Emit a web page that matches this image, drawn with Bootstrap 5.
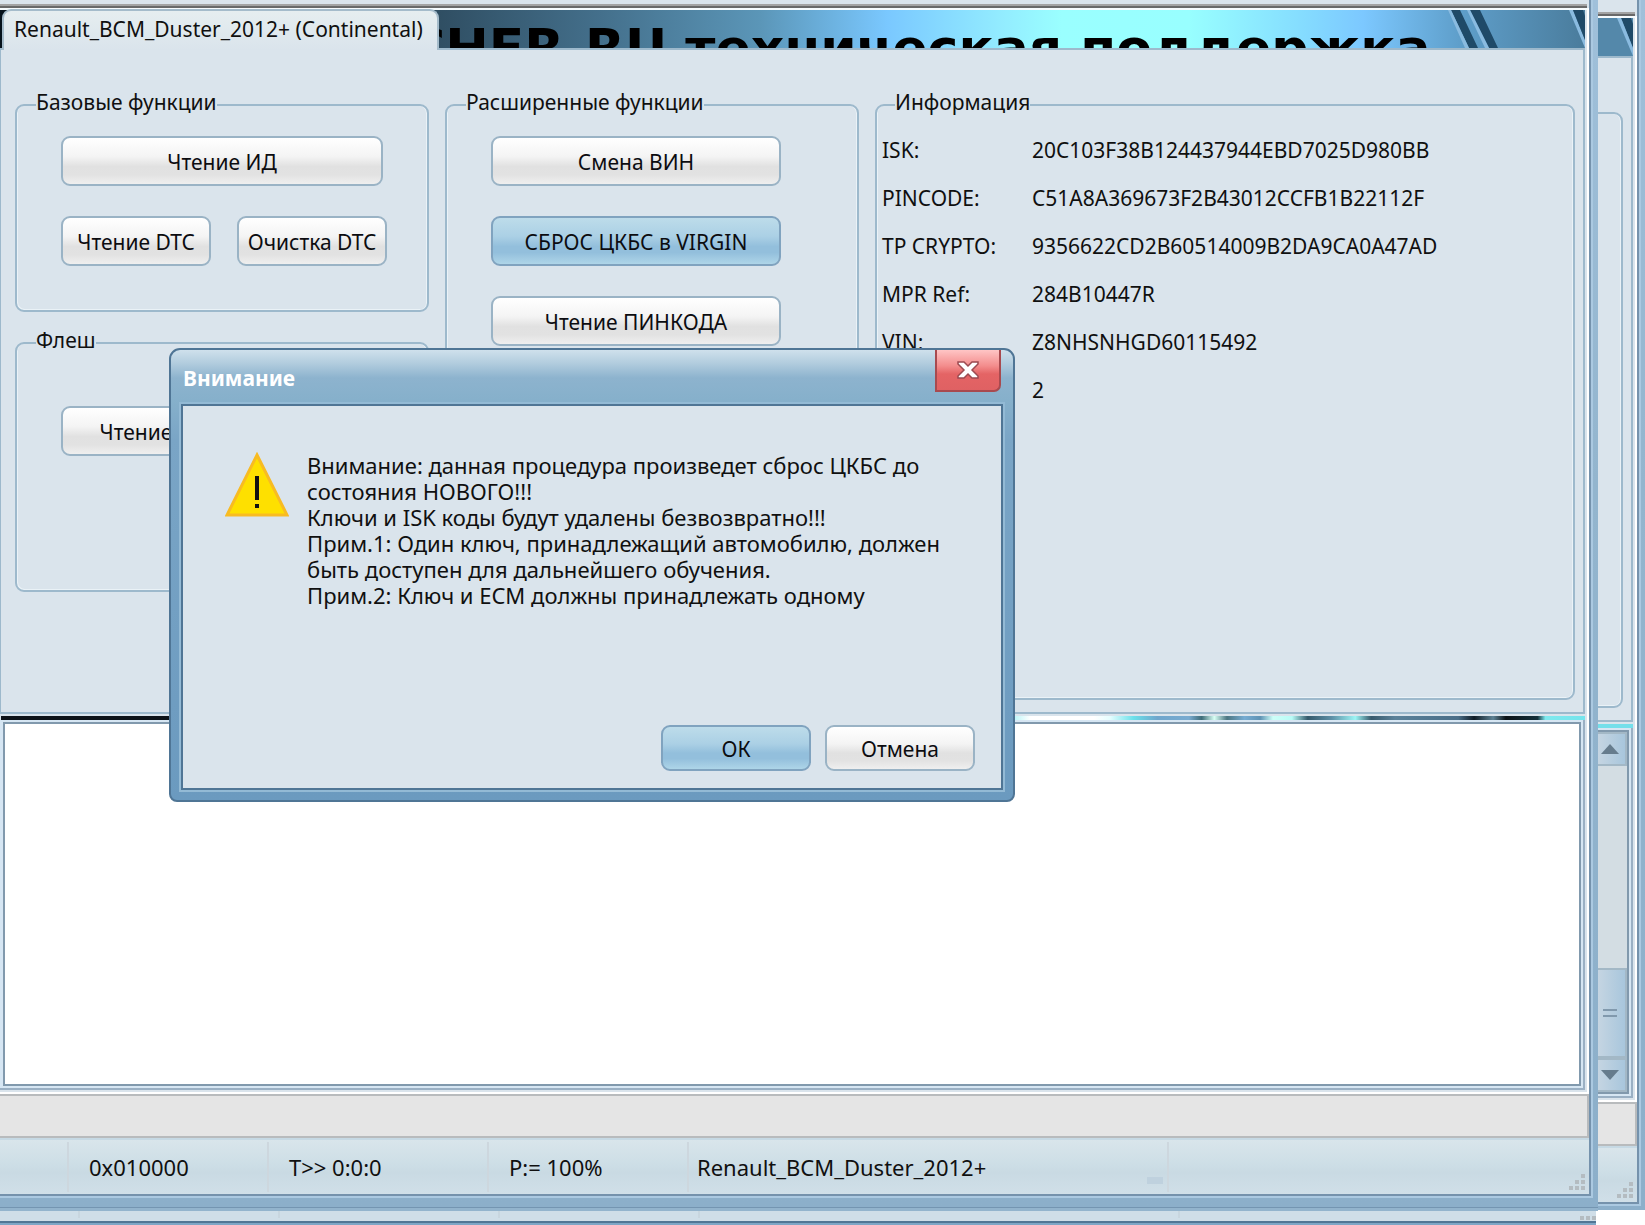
<!DOCTYPE html>
<html lang="ru">
<head>
<meta charset="utf-8">
<meta name="viewport" content="width=device-width, initial-scale=1">
<title>Renault_BCM_Duster_2012+</title>
<link rel="stylesheet" href="https://cdn.jsdelivr.net/npm/bootstrap@5.3.0/dist/css/bootstrap.min.css">
<style>
:root{--face:#dae4ec;--line:#9db9cc;--frame:#96b6cf;--edge:#7592ac;--glow:#abc9e1}
body{font-family:"Noto Sans","Open Sans",sans-serif;font-size:21px;line-height:24px;color:#101010;background:#fff;min-height:100vh}
.desk{height:100vh;min-height:1000px}
/* stacked application windows */
.win{position:absolute;background:linear-gradient(#a0c0da,#93b5ce 40%,#8cafca)}
.win-main{inset:0 47px 14px 0;padding:0 7px 12px 0;border-bottom:3px solid #93b4cd;z-index:2;box-shadow:inset 0 -1px #7495b1}
.win-back{inset:0 0 15px 48px;padding:0 6px 6px 0;z-index:1}
.win-third{inset:auto 49px 0 0;height:20px;border-bottom:2px solid #7ea6c6;box-shadow:inset 0 -2px #527695;background:#cfdee8}
.client{background:var(--face);border-right:2px solid var(--edge);border-bottom:2px solid var(--edge);box-shadow:0 0 0 2px var(--glow)}
.cap-line{height:8px;border-bottom:2px solid #696969;box-shadow:inset 0 -2px #a3a3a3;margin-right:2px}
.win-back .cap-line{height:16px}
.inner{border-top:2px solid #f6fbfd;border-right:2px solid #fff;border-bottom:2px solid #fff;padding-right:2px;padding-bottom:2px}
.banner{height:38px;background:linear-gradient(90deg,#06131c 0,#2e4c60 27%,#44708c 38%,#5b96b8 48%,#7ac8ff 56%,#92ebff 63%,#9affff 67%,#98ffff 75%,#85ddff 82%,#7cc8ff 86%,#5f9fcb 92%,#4a7c9c 100%)}
.win-back .banner{background:#5488aa}
.banner-text{font:bold 52px/60px "DejaVu Sans",sans-serif;color:#000;white-space:nowrap;height:38px;overflow:hidden;margin-left:-32px;padding-top:8px}
.banner svg{width:140px;height:38px}
.tab-face{font-size:21px;line-height:24px;color:#101010;background:linear-gradient(#e6eef0,var(--face));border:2px solid #a5bccb;border-bottom:0;border-radius:9px 9px 0 0;width:437px;height:41px;margin-top:-1px;margin-left:2px;padding:0 0 4px 10px;z-index:1;text-align:left;white-space:nowrap}
.page{border:2px solid var(--line);border-left-width:1px;padding:44px 8px 12px 14px;gap:16px}
.win-back .page{border-left:0;padding-top:46px;padding-right:8px}
.strip{height:4px;margin:2px 0 0 1px;background:linear-gradient(90deg,#0c1218 0,#0c1218 40%,#bff6f8 64%,#fff 65%,#fff 69%,#e6feff 70%,#6be0ea 71.5%,#6fa6cc 73%,#79abd0 75%,#3e6c78 75.8%,#d8fff4 76.6%,#4c7682 77.4%,#76acd2 78.5%,#5f93b4 79.5%,#cdfff8 80.3%,#b8fbf6 81.5%,#33596b 82.5%,#5d8fa6 84%,#9cf5f5 85.5%,#37596c 86.5%,#5b8199 88%,#4a6e88 92%,#0f1c26 93%,#5d8294 94.2%,#0b1216 95%,#14303a 97%,#7fe9ee 97.5%,#74e4ec 100%)}
.win-back .strip{background:#74dfea}
.side-col{width:414px;gap:20px}
.box{border:2px solid var(--line);border-radius:9px;box-shadow:inset 1px -1px #eaf2f7,inset -1px 0 #eaf2f7;padding:20px 0 0 44px;margin:0}
.box legend{font-size:21px;line-height:16px;height:22px;margin:0 0 0 -25px}
.box-base{height:218px}.box-flash{height:260px;padding-top:52px}.box-ext{height:498px}
.ui-btn{font-size:21px;line-height:24px;color:#0c0c10;height:50px;padding:2px 0 0;border:2px solid #9ab3c5;border-radius:9px;background:linear-gradient(#fff,#f4f4f4 40%,#e1e1e1 62%,#e2e2e2 80%,#efefef);white-space:nowrap}
.ui-btn.hot{border-color:#80a3bf;background:linear-gradient(#bddcea,#abd0e5 40%,#93bfdc 62%,#93bfdc 75%,#aed5e8)}
.w-full{width:322px}.w-half{width:150px}.w-ext{width:290px}
.box-info{padding:10px 0 0 5px}
.box-info legend{margin-left:13px}
.facts{grid-template-columns:150px 1fr;grid-auto-rows:48px;align-items:center}
.facts dt,.facts dd{font-weight:400;margin:0}
.logframe{border-right:2px solid #9ab0c4;border-bottom:2px solid #9ab0c4;padding:2px 2px 2px 3px;background:#d6e6f3}
.logframe textarea{border:2px solid #8199ad;border-radius:0;resize:none;background:#fff;outline:0}
.progline{height:44px;border:2px solid #b8bbbd;border-left:0;background:#e5e5e5}
.statbar{height:56px;border-top:2px solid #c6d9e4;background:linear-gradient(#d9e5eb,#cddee6 45%,#c9dae3 60%,#d0dfe8)}
.statbar span{font-size:22px;line-height:50px;border-right:2px solid #cdd7de;padding-left:20px;height:50px;margin-top:2px;white-space:nowrap}
.win-third i{border-right:2px solid #c8d6df;height:8px;margin-top:1px}
.c0{width:69px}.c1{width:200px}.c2{width:220px}.c3{width:200px}.c4{width:480px}.statbar .c4{padding-left:8px}
.c4 b{width:16px;height:7px;background:#bfd1de;margin:0 4px 8px auto}
.grip{width:16px;height:16px;fill:#b4bcc1}
/* scroll bar of the rear window */
.vbar{width:31px;border:2px solid #8199ad;border-left:0;background:#d3dde3}
.vbar button{border:2px solid #a3b8c6;border-left:0;padding:0;height:34px;background:linear-gradient(90deg,#c5d5e2,#a8c6dc)}
.vbar .thumb{height:90px}
.vbar svg{display:block;width:18px;margin-left:auto;margin-right:6px}
/* message box */
.msg{position:absolute;left:169px;top:348px;width:846px;z-index:5;border:2px solid #4f7595;border-radius:11px 11px 8px 8px;padding:0 10px 10px;background:linear-gradient(#cfe0ec,#b0cbdd 14px,#8db3ce 28px,#86b0cb 50px,#7aa5c6 90px,#6b9abf)}
.msg-head{height:54px}
.msg-title{font-size:21px;line-height:24px;font-weight:700;color:#fff;margin:16px 0 0 2px}
.msg-close{width:66px;height:42px;border:2px solid #a84a4f;border-top:0;border-radius:0 0 7px 0;background:linear-gradient(#ffc5c5,#f38c8c 40%,#e46465 60%,#df6163);padding:0;margin-right:2px}
.msg-body{height:386px;background:var(--face);border:2px solid #4f7595;box-shadow:0 0 0 2px #93bad5;padding:46px 26px 17px 42px}
.msg-body p{font-size:22px;line-height:26px;margin:0 0 0 18px;white-space:pre-line}
.msg .ui-btn{width:150px;height:46px}
.warn{width:64px;height:66px;flex:none}
</style>
<script src="https://cdn.jsdelivr.net/npm/bootstrap@5.3.0/dist/js/bootstrap.bundle.min.js"></script>
</head>
<body>
<div class="desk position-relative overflow-hidden">

  <div class="win win-third d-flex pt-1" aria-hidden="true">
    <i style="width:80px"></i><i class="c1"></i><i class="c2"></i><i class="c3"></i><i class="c4"></i>
    <svg class="grip ms-auto" viewBox="0 0 16 16"><path d="M0 7h4v4H0zM6 7h4v4H6zM12 7h4v4h-4z"/></svg>
  </div>

  <div class="win win-back d-flex flex-column" aria-hidden="true">
    <div class="client flex-grow-1 d-flex flex-column">
      <div class="cap-line"></div>
      <div class="inner flex-grow-1 d-flex flex-column">
        <div class="banner d-flex">
          <svg class="ms-auto" viewBox="0 0 140 38"><path d="M128 0h10l2 6v24z" fill="#1f4a68"/><path d="M124 0h4l12 30v8z" fill="#8abbe0"/></svg>
        </div>
        <div class="page d-flex" style="height:666px"><div class="box flex-grow-1 mt-2 pt-0"></div></div>
        <div class="strip"></div>
        <div class="logframe flex-grow-1 d-flex justify-content-end">
          <div class="vbar d-flex flex-column">
            <button type="button" tabindex="-1"><svg height="10" viewBox="0 0 18 10"><path d="M9 0l9 10H0z" fill="#667c8d"/></svg></button>
            <div class="flex-grow-1"></div>
            <button type="button" class="thumb" tabindex="-1"><svg height="8" viewBox="0 0 18 8"><path d="M2 0h14v2H2zM2 6h14v2H2z" fill="#8199ad"/></svg></button>
            <button type="button" tabindex="-1"><svg height="10" viewBox="0 0 18 10"><path d="M0 0h18l-9 10z" fill="#667c8d"/></svg></button>
          </div>
        </div>
      </div>
      <div class="progline"></div>
      <div class="statbar d-flex align-items-end justify-content-end pe-1 pb-1"><svg class="grip" viewBox="0 0 16 16"><path d="M12 0h4v4h-4zM6 6h4v4H6zM12 6h4v4h-4zM0 12h4v4H0zM6 12h4v4H6zM12 12h4v4h-4z"/></svg></div>
    </div>
  </div>

  <main class="win win-main d-flex flex-column">
    <div class="client flex-grow-1 d-flex flex-column">
      <div class="cap-line"></div>
      <div class="inner flex-grow-1 d-flex flex-column">
        <div class="banner d-flex" role="tablist">
          <button type="button" class="tab-face flex-shrink-0 position-relative" role="tab" aria-selected="true">Renault_BCM_Duster_2012+ (Continental)</button>
          <div class="banner-text">CHER.RU техническая поддержка</div>
          <svg class="ms-auto flex-shrink-0" viewBox="0 0 140 38"><path d="M6 0h9l18 38h-9zM25 0h10l18 38h-9z" fill="#1f4a68"/><path d="M3 0h3l18 38h-4zM22 0h3l19 38h-4zM124 0h4l12 30v8z" fill="#8abbe0"/><path d="M128 0h10l2 6v24z" fill="#1f4a68"/></svg>
        </div>
        <div class="page d-flex align-items-stretch">
          <div class="side-col d-flex flex-column flex-shrink-0">
            <fieldset class="box box-base">
              <legend class="float-none w-auto p-0">Базовые функции</legend>
              <button type="button" class="btn ui-btn w-full">Чтение ИД</button>
              <div class="d-flex" style="gap:26px;margin-top:30px">
                <button type="button" class="btn ui-btn w-half">Чтение DTC</button>
                <button type="button" class="btn ui-btn w-half">Очистка DTC</button>
              </div>
            </fieldset>
            <fieldset class="box box-flash">
              <legend class="float-none w-auto p-0">Флеш</legend>
              <button type="button" class="btn ui-btn w-half">Чтение</button>
            </fieldset>
          </div>
          <div class="side-col flex-shrink-0">
            <fieldset class="box box-ext">
              <legend class="float-none w-auto p-0">Расширенные функции</legend>
              <div class="d-flex flex-column" style="gap:30px">
                <button type="button" class="btn ui-btn w-ext">Смена ВИН</button>
                <button type="button" class="btn ui-btn hot w-ext">СБРОС ЦКБС в VIRGIN</button>
                <button type="button" class="btn ui-btn w-ext">Чтение ПИНКОДА</button>
              </div>
            </fieldset>
          </div>
          <fieldset class="box box-info flex-grow-1" style="height:606px">
            <legend class="float-none w-auto p-0">Информация</legend>
            <dl class="facts d-grid m-0">
              <dt>ISK:</dt><dd>20C103F38B124437944EBD7025D980BB</dd>
              <dt>PINCODE:</dt><dd>C51A8A369673F2B43012CCFB1B22112F</dd>
              <dt>TP CRYPTO:</dt><dd>9356622CD2B60514009B2DA9CA0A47AD</dd>
              <dt>MPR Ref:</dt><dd>284B10447R</dd>
              <dt>VIN:</dt><dd>Z8NHSNHGD60115492</dd>
              <dt></dt><dd>2</dd>
            </dl>
          </fieldset>
        </div>
        <div class="strip"></div>
        <div class="logframe flex-grow-1 d-flex">
          <textarea class="flex-grow-1" readonly aria-label="Журнал"></textarea>
        </div>
      </div>
      <div class="progline" role="progressbar" aria-label="Ход операции" aria-valuenow="0" aria-valuemin="0" aria-valuemax="100"></div>
      <footer class="statbar d-flex">
        <span class="c0"></span><span class="c1">0x010000</span><span class="c2">T&gt;&gt; 0:0:0</span><span class="c3">P:= 100%</span><span class="c4 d-flex">Renault_BCM_Duster_2012+<b class="align-self-end"></b></span>
        <svg class="grip ms-auto align-self-end mb-1 me-1" viewBox="0 0 16 16"><path d="M12 0h4v4h-4zM6 6h4v4H6zM12 6h4v4h-4zM0 12h4v4H0zM6 12h4v4H6zM12 12h4v4h-4z"/></svg>
      </footer>
    </div>
  </main>

  <section class="msg" role="alertdialog" aria-labelledby="msgTitle" aria-describedby="msgText">
    <header class="msg-head d-flex justify-content-between align-items-start">
      <h1 class="msg-title" id="msgTitle">Внимание</h1>
      <button type="button" class="msg-close d-flex align-items-center justify-content-center" aria-label="Закрыть">
        <svg width="22" height="18" viewBox="0 0 22 18"><path d="M1 1h6l4 4 4-4h6v2l-6 6 6 6v2h-6l-4-4-4 4H1v-2l6-6-6-6z" fill="#fff" stroke="#9c4a50" stroke-width="1.5"/></svg>
      </button>
    </header>
    <div class="msg-body d-flex flex-column justify-content-between">
      <div class="d-flex">
        <svg class="warn" viewBox="0 0 64 66"><path d="M32 3L62 63H2z" fill="#fee000" stroke="#f8bb22" stroke-width="3"/><path d="M30 24h4v24h-4zM30 52h4v4h-4z" fill="#111"/></svg>
        <p id="msgText">Внимание: данная процедура произведет сброс ЦКБС до
состояния НОВОГО!!!
Ключи и ISK коды будут удалены безвозвратно!!!
Прим.1: Один ключ, принадлежащий автомобилю, должен
быть доступен для дальнейшего обучения.
Прим.2: Ключ и ECM должны принадлежать одному</p>
      </div>
      <div class="d-flex justify-content-end" style="gap:14px">
        <button type="button" class="btn ui-btn hot">ОК</button>
        <button type="button" class="btn ui-btn">Отмена</button>
      </div>
    </div>
  </section>
</div>
</body>
</html>
